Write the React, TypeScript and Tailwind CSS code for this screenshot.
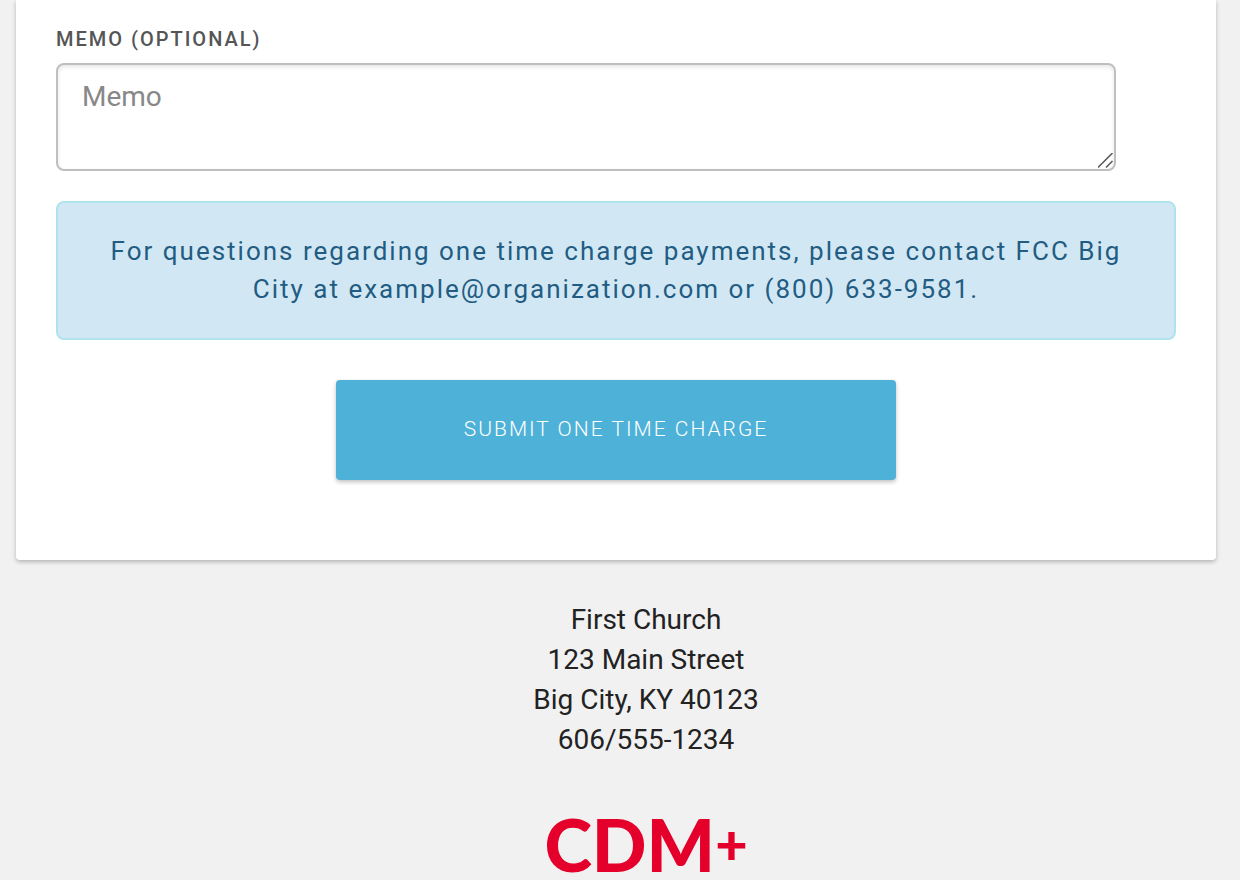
import React from 'react';

const address = ['First Church', '123 Main Street', 'Big City, KY 40123', '606/555-1234'];

function MemoField() {
  return (
    <div>
      <label
        htmlFor="memo"
        className="block text-[20px] leading-6 font-medium uppercase tracking-[2px] text-[#555]"
      >
        Memo (optional)
      </label>
      <div className="relative flex mt-3 mr-[60px]">
        <textarea
          id="memo"
          name="memo"
          placeholder="Memo"
          className="w-full h-[108px] px-6 py-3 text-[28px] leading-10 text-[#222] placeholder:text-[#888] bg-white border-2 border-[#bfbfbf] rounded-lg shadow-[inset_0_2px_4px_rgba(0,0,0,0.1)] resize-y outline-none focus:border-[#4eb1d8] [&::-webkit-resizer]:hidden"
        />
        <svg
          className="absolute right-[2px] bottom-[2px] w-4 h-4 pointer-events-none"
          viewBox="0 0 16 16"
          fill="none"
          stroke="#555"
          strokeWidth="1.5"
          aria-hidden="true"
        >
          <path d="M0 14.5 14.5 0M8 14.5 14.5 8" />
        </svg>
      </div>
    </div>
  );
}

function ContactNotice() {
  return (
    <p className="mt-[30px] px-8 pt-[29px] pb-[30px] text-center text-[26px] leading-[38px] tracking-[2px] text-[#235c82] bg-[#d1e8f4] border-2 border-[#afe3ed] rounded-lg">
      For questions regarding one time charge payments, please contact FCC Big City at
      example@organization.com or (800) 633-9581.
    </p>
  );
}

function Footer() {
  return (
    <footer className="pt-10 pl-[60px] text-center text-[#222]">
      <address className="not-italic text-[28px] leading-10">
        {address.map((line) => (
          <div key={line}>{line}</div>
        ))}
      </address>
      <a
        href="#cdm"
        className="flex justify-center items-center mt-12 h-[72px] font-['Lato',sans-serif] font-black text-[#e4002b]"
      >
        <span className="text-[72px] leading-[72px]">CDM</span>
        <span className="text-[56px] leading-[72px]">+</span>
      </a>
    </footer>
  );
}

export default function App() {
  return (
    <div className="min-h-screen bg-[#f1f1f1] pl-4 pr-6 font-['Roboto',sans-serif]">
      <form
        onSubmit={(e) => e.preventDefault()}
        className="px-10 pt-[27px] pb-20 bg-white rounded-b shadow-[0_2px_4px_rgba(0,0,0,0.25)]"
      >
        <MemoField />
        <ContactNotice />
        <button
          type="submit"
          className="block w-1/2 h-[100px] mt-10 mx-auto text-[21px] font-light uppercase tracking-[2px] text-white bg-[#4eb1d8] rounded shadow-[0_2px_4px_rgba(0,0,0,0.25)] hover:bg-[#3ea5cd]"
        >
          Submit One Time Charge
        </button>
      </form>
      <Footer />
    </div>
  );
}
